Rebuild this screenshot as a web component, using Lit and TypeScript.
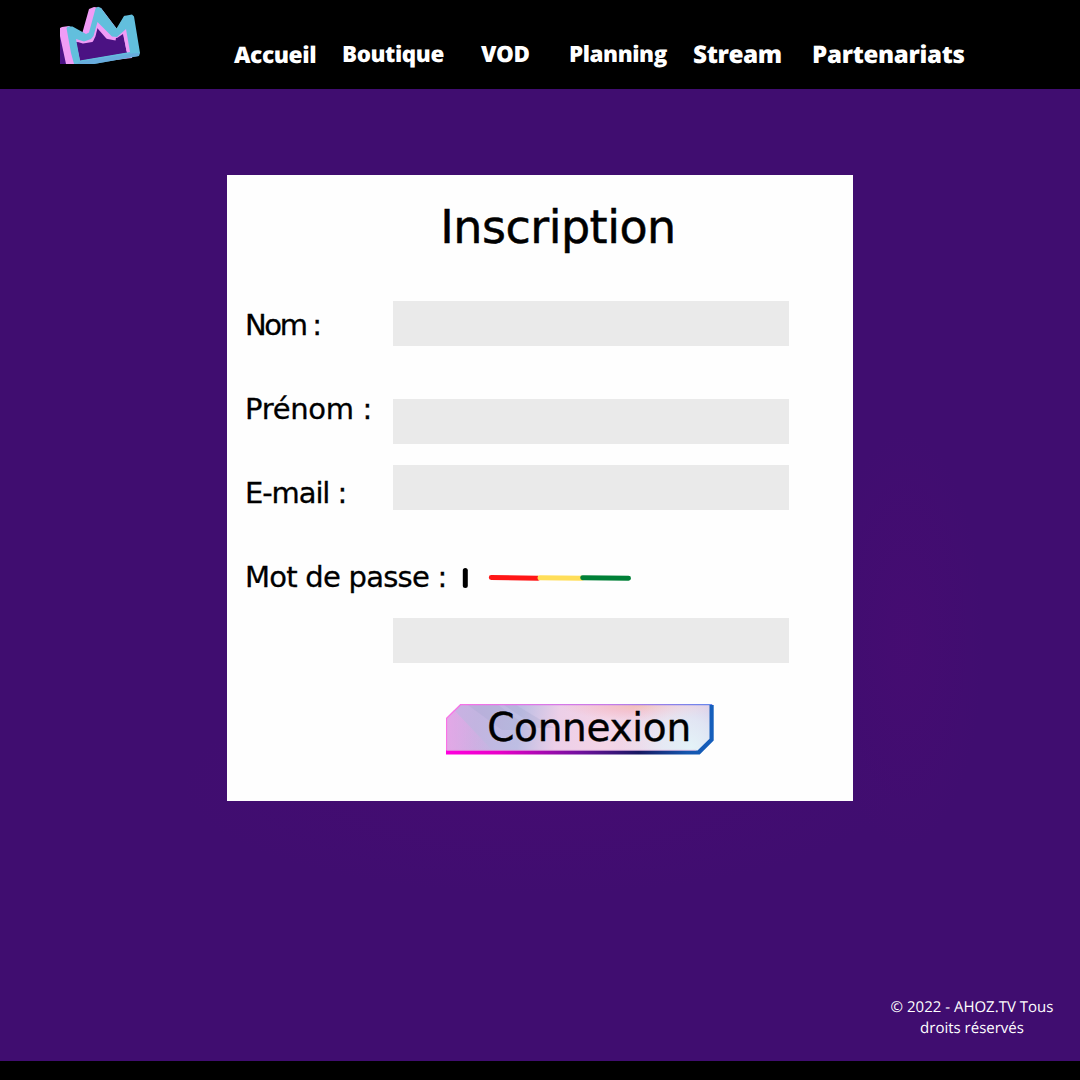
import { LitElement, html, css } from "lit";
import { customElement } from "lit/decorators.js";

@customElement("crown-logo")
class CrownLogo extends LitElement {
  static styles = css`
    :host { display: block; width: 80px; height: 58px; }
    svg { display: block; }
  `;
  render() {
    return html`<svg width="80" height="58" viewBox="0 0 80 58" stroke-linejoin="round">
      <path d="M0 24 L8 58 H0Z" fill="#4c1287" />
      <path d="M2 21 L9 20 L22 28 L29 3 L34 1 L41 2 L57 23 L65 9.5 L74 24 L72 52 L20 58 H6 L0 30 V22Z" fill="#f09cf6" />
      <path d="M16 36 L24 36.5 L33 35 L37 20 L47 31 L57 32 L63 28 L67 47 L20 55Z" fill="#4b1283" />
      <path d="M16 34 L23 36.5 L32 35 L34.5 30 L37 20" fill="none" stroke="#f09cf6" stroke-width="2" />
      <path d="M38 19 L48 30.5 L56 32 M66 28 L69 45" fill="none" stroke="#f09cf6" stroke-width="5" />
      <path fill-rule="evenodd" fill="#62bfdd"
        d="M6.5 22 L8 20.5 L12.5 20.5 L26 28 L29 26.5 L35.5 2.500 L38 .7 L41 2 L56.5 22.5 L64 10 L72 8.5 L74 10.5 L80 47 L79 50 L34 58 H14 L11 47Z
           M16 33 L24 35.5 L31 33 L33.5 30 L37.5 16 L52 30.5 L57 31 L66 23 L70 46 L20 54.5Z" />
      <path d="M21 55.5 L70 47.5 L79 47 L78.5 50 L34 58 H16Z" fill="#6ba5dc" opacity=".75" />
    </svg>`;
  }
}

@customElement("strength-meter")
class StrengthMeter extends LitElement {
  static styles = css`
    :host { display: block; width: 169px; height: 24px; }
    svg { display: block; }
  `;
  render() {
    return html`<svg width="169" height="24" viewBox="0 0 169 24" fill="none" stroke-width="5" stroke-linecap="round">
      <path d="M3.3 4.5 V19.5" stroke="#000" />
      <path d="M29.3 11.5 L76 12.2" stroke="#ff1616" />
      <path d="M78 11.8 L120 12.2" stroke="#ffde59" />
      <path d="M120.7 11.8 L166.5 12.2" stroke="#008037" />
    </svg>`;
  }
}

@customElement("neon-button")
class NeonButton extends LitElement {
  static styles = css`
    :host { display: grid; width: 268px; height: 51px; }
    svg, button { grid-area: 1 / 1; }
    svg { display: block; }
    button {
      border: 0; margin: 0; padding: 0 0 0 18px; background: none; color: #000;
      font: 39px/48px "DejaVu Sans", sans-serif; letter-spacing: -0.3px;
      height: 48px; white-space: nowrap; text-align: center;
      -webkit-text-stroke: .4px #000;
    }
  `;
  render() {
    return html`<svg width="268" height="51" viewBox="0 0 268 51">
        <defs>
          <linearGradient id="fill" x1="0" y1="0" x2="268" y2="30" gradientUnits="userSpaceOnUse">
            <stop offset="0" stop-color="#cdb0e4" /><stop offset=".12" stop-color="#c2b4e0" />
            <stop offset=".28" stop-color="#bdbee3" /><stop offset=".42" stop-color="#eccfe8" />
            <stop offset=".6" stop-color="#f4d5e6" /><stop offset=".82" stop-color="#ead6e8" />
            <stop offset="1" stop-color="#c9b5e0" />
          </linearGradient>
          <radialGradient id="peach" cx=".73" cy=".02" r=".3">
            <stop offset="0" stop-color="#f2c1b6" /><stop offset=".45" stop-color="#f4bfcc" stop-opacity=".8" />
            <stop offset="1" stop-color="#f4bfcc" stop-opacity="0" />
          </radialGradient>
          <radialGradient id="ice" cx="245" cy="44" r="70" gradientUnits="userSpaceOnUse">
            <stop offset="0" stop-color="#e4f3f8" /><stop offset=".4" stop-color="#e4eef7" stop-opacity=".8" />
            <stop offset="1" stop-color="#eee6f2" stop-opacity="0" />
          </radialGradient>
          <linearGradient id="pink"><stop offset="0" stop-color="#efa3e8" /><stop offset="1" stop-color="#efa3e8" stop-opacity="0" /></linearGradient>
          <linearGradient id="top" x1="0" y1="0" x2="268" y2="0" gradientUnits="userSpaceOnUse"><stop offset="0" stop-color="#fb72e6" /><stop offset=".6" stop-color="#c77be8" /><stop offset="1" stop-color="#6586ec" /></linearGradient>
          <linearGradient id="bottom">
            <stop offset="0" stop-color="#ff00de" /><stop offset=".2" stop-color="#e800c8" />
            <stop offset=".5" stop-color="#71109e" /><stop offset=".72" stop-color="#161861" />
            <stop offset=".9" stop-color="#1456ae" /><stop offset="1" stop-color="#155fbd" />
          </linearGradient>
        </defs>
        <path d="M.5 14 L14.5 .5 H267 V36 L253 50 H.5Z" fill="url(#fill)" />
        <path d="M.5 14 L14.5 .5 H267 V36 L253 50 H.5Z" fill="url(#peach)" />
        <path d="M.5 14 L14.5 .5 H267 V36 L253 50 H.5Z" fill="url(#ice)" />
        <path d="M.5 14 L8 6 L50 50 H.5Z" fill="url(#pink)" opacity=".65" />
        <path d="M22 1 H52 L86 26 L56 26Z M58 1 H70 L108 24 L92 24Z" fill="#9fa4cd" opacity=".25" />
        <path d="M.5 48 V14.3 L14.5 .7 H266" fill="none" stroke="url(#top)" stroke-width="1.3" />
        <path d="M0 46.5 H251.5 L263.5 34.7 V1 H267.7 V36.5 L253.7 50.5 H0Z" fill="url(#bottom)" />
        <path d="M1 46.3 H250" stroke="#e5a6dc" stroke-width=".8" opacity=".7" />
      </svg>
      <button type="button">Connexion</button>`;
  }
}

@customElement("app-root")
class AppRoot extends LitElement {
  static styles = css`
    :host {
      display: flex; flex-direction: column; box-sizing: border-box;
      width: 1080px; height: 1080px; overflow: hidden;
      background:
        radial-gradient(ellipse 80px 210px at 905px 640px, rgba(95, 8, 120, .16), transparent),
        radial-gradient(ellipse 360px 110px at 540px 785px, rgba(85, 10, 120, .22), transparent),
        #400d70;
    }
    header { display: flex; height: 89.4px; background: #000; flex: none; }
    crown-logo { margin: 6px 0 0 60px; flex: none; }
    nav {
      display: grid; grid-template-columns: 108px 139px 88px 124px 119px 170px;
      align-items: start; margin-left: 94px; padding-top: 38px;
      text-rendering: geometricPrecision;
    }
    .link {
      color: #fff; text-decoration: none; white-space: nowrap;
      font: 800 22.8px/32px "Open Sans", sans-serif; letter-spacing: -.45px; padding-top: 1px;
    }
    .raised { font-size: 22.4px; padding-top: 0; letter-spacing: -.42px; }
    .large { font-size: 24.4px; }
    .partners { font-size: 24.1px; letter-spacing: -.3px; }
    main { flex: 1; display: flex; justify-content: center; align-items: flex-start; padding-top: 85.6px; }
    .card {
      display: flex; flex-direction: column; align-items: center; box-sizing: border-box;
      width: 626px; height: 626px; background: #fefefe; color: #000;
      font-family: "DejaVu Sans", sans-serif;
    }
    h1 { margin: 22px 0 0 36px; font-size: 46px; line-height: 60px; font-weight: 400; letter-spacing: -.5px; -webkit-text-stroke: .5px #000; }
    form { display: grid; grid-template-columns: 148px 396px; width: 626px; box-sizing: border-box; padding: 26px 0 0 18px; height: 421px; }
    .labels { display: flex; flex-direction: column; }
    .row { display: flex; align-items: center; height: 84px; white-space: nowrap; font-size: 29px; line-height: 84px; -webkit-text-stroke: .3px #000; }
    .nom { letter-spacing: -2.4px; }
    .prenom { letter-spacing: -.3px; }
    .email { letter-spacing: -1.1px; }
    .pass { letter-spacing: -.75px; }
    strength-meter { margin: 2px 0 0 15px; flex: none; }
    .fields { display: flex; flex-direction: column; padding-top: 17.6px; }
    input { display: block; box-sizing: border-box; width: 396px; height: 45px; border: 0; padding: 0 12px; background: #eaeaea; flex: none; font: 20px "DejaVu Sans", sans-serif; }
    .second { margin-top: 53px; }
    .third { margin-top: 21.6px; }
    .fourth { margin-top: 108px; }
    neon-button { margin: 26px 0 0 80px; }
    .legal { margin: 0 17px 22px auto; width: 182px; text-align: center; color: #fff; font: 400 15px/21px "Open Sans", sans-serif; text-rendering: geometricPrecision; }
    .legal span { display: block; white-space: nowrap; }
    .bar { height: 19px; background: #000; flex: none; }
  `;

  private links = [
    ["Accueil", ""],
    ["Boutique", "raised"],
    ["VOD", "raised"],
    ["Planning", "raised"],
    ["Stream", "large"],
    ["Partenariats", "partners"],
  ];

  render() {
    return html`
      <header>
        <crown-logo></crown-logo>
        <nav>${this.links.map(([name, kind]) => html`<a class="link ${kind}">${name}</a>`)}</nav>
      </header>
      <main>
        <section class="card">
          <h1>Inscription</h1>
          <form>
            <div class="labels">
              <label class="row nom" for="nom">Nom :</label>
              <label class="row prenom" for="prenom">Prénom :</label>
              <label class="row email" for="email">E-mail :</label>
              <div class="row"><label class="pass" for="pass">Mot de passe :</label><strength-meter></strength-meter></div>
            </div>
            <div class="fields">
              <input id="nom" type="text" />
              <input id="prenom" class="second" type="text" />
              <input id="email" class="third" type="email" />
              <input id="pass" class="fourth" type="password" />
            </div>
          </form>
          <neon-button></neon-button>
        </section>
      </main>
      <footer>
        <div class="legal"><span>© 2022 - AHOZ.TV Tous</span><span>droits réservés</span></div>
        <div class="bar"></div>
      </footer>
    `;
  }
}
